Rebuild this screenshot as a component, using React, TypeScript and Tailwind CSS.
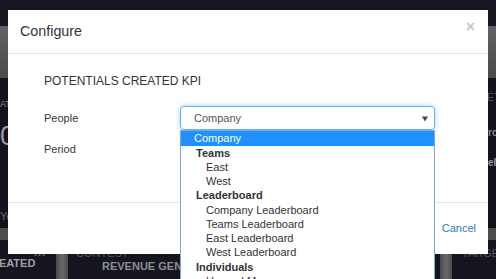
const groups = [
  { label: "Teams", items: ["East", "West"] },
  {
    label: "Leaderboard",
    items: ["Company Leaderboard", "Teams Leaderboard", "East Leaderboard", "West Leaderboard"],
  },
  { label: "Individuals", items: ["Howard Morrow", "Jane Smith"] },
];

const Arrow = () => (
  <svg width="6" height="6" viewBox="0 0 6 6" className="absolute right-[6px] top-[9px]">
    <path d="M0 0.5 L6 0.5 L3 5.5 Z" fill="#444" />
  </svg>
);

const DropdownList = () => (
  <div className="absolute left-0 top-[24px] w-[255px] h-[160px] bg-white border border-[#7ea6e0] text-[11px] text-[#333] z-10">
    <div className="h-[14.5px] leading-[14.5px] bg-[#1e90ff] text-white pl-[13px]">Company</div>
    {groups.map((g) => (
      <div key={g.label}>
        <div className="h-[14.25px] leading-[14.25px] pl-[15px] font-bold">{g.label}</div>
        {g.items.map((item) => (
          <div key={item} className="h-[14.25px] leading-[14.25px] pl-[25px]">
            {item}
          </div>
        ))}
      </div>
    ))}
  </div>
);

const Background = () => (
  <div className="flex flex-col w-full h-full">
    <div className="h-[26px] bg-[#151621]" />
    <div className="h-[52px] bg-gradient-to-b from-[#626264] to-[#4a4a4c]" />
    <div className="h-[150px] flex justify-between text-[#8a8a90]">
      <div className="flex flex-col text-[9px]">
        <p className="mt-[21px] leading-[10px]">AT</p>
        <p className="mt-[14px] text-[27px] leading-[27px] text-[#9a9aa0]">0</p>
        <p className="mt-[58px] text-[11px] text-[#6a6a70]">Ye</p>
      </div>
      <div className="flex flex-col items-end text-[10px]">
        <p className="mt-[12px] -mr-[4px] text-[#55565c]">ET</p>
        <p className="mt-[20px] -mr-[2px] font-bold text-[#8c8c92]">ro</p>
        <p className="mt-[15px] -mr-[3px] font-bold text-[#9a9aa0]">ell</p>
      </div>
    </div>
    <div className="h-[12px] bg-[#4c4c4e]" />
    <div className="flex flex-1 text-[11px] font-bold">
      <div className="w-[56px] bg-[#14151f] text-[#a0a0a6] flex flex-col">
        <p className="pl-[34px] mt-[8px] leading-[8px] tracking-[1px] text-[#777]">...</p>
        <p className="mt-[1px] -ml-[17px] leading-[13px]">CREATED</p>
      </div>
      <div className="w-[12px] bg-gradient-to-r from-[#4a4a4c] via-[#6a6a6c] to-[#4a4a4c]" />
      <div className="flex-1 bg-[#14151f] flex flex-col">
        <p className="pl-[8px] mt-[8px] font-normal leading-[10px] text-[#55565c]">CONTEST</p>
        <p className="pl-[34px] mt-[2px] leading-[13px] text-[#8e8e94]">REVENUE GENERATED</p>
      </div>
      <div className="w-[12px] mt-[3px] bg-gradient-to-r from-[#4a4a4c] via-[#6a6a6c] to-[#4a4a4c]" />
      <div className="w-[44px] bg-[#14151f]">
        <p className="pl-[10px] mt-[8px] font-normal leading-[10px] text-[#55565c]">TARGET</p>
      </div>
    </div>
  </div>
);

const ConfigureModal = () => (
  <div className="absolute left-[8px] top-[10px] w-[480px] h-[244px] bg-white flex flex-col text-[#333]">
    <div className="h-[44px] border-b border-[#e5e5e5] flex justify-between pl-[12px] pr-[13px]">
      <p className="self-center text-[14.3px]">Configure</p>
      <span className="mt-[7px] text-[16px] leading-[20px] font-bold text-[#c8c8c8]">×</span>
    </div>
    <div className="h-[148px] pt-[19px] px-[36px]">
      <p className="text-[12px] leading-[17px]">POTENTIALS CREATED KPI</p>
      <div className="mt-[16px] flex flex-col gap-[7px] text-[11px]">
        <div className="flex items-center">
          <p className="w-[136px]">People</p>
          <div className="relative">
            <div className="relative w-[255px] h-[24px] border border-[#66afe9] rounded-[4px] shadow-[0_0_5px_rgba(102,175,233,0.6)] pl-[13px] leading-[22px] text-[#555]">
              Company
              <Arrow />
            </div>
            <DropdownList />
          </div>
        </div>
        <div className="flex items-center">
          <p className="w-[136px]">Period</p>
          <div className="w-[255px] h-[24px] border border-[#ccc] rounded-[4px]" />
        </div>
      </div>
    </div>
    <div className="flex-1 border-t border-[#e5e5e5] flex items-center justify-end pr-[12px]">
      <span className="text-[11px] text-[#337ab7]">Cancel</span>
    </div>
  </div>
);

export default function App() {
  return (
    <div className="relative w-[496px] h-[279px] overflow-hidden bg-[#12131b] font-['Liberation_Sans',Arial,sans-serif]">
      <Background />
      <ConfigureModal />
    </div>
  );
}
